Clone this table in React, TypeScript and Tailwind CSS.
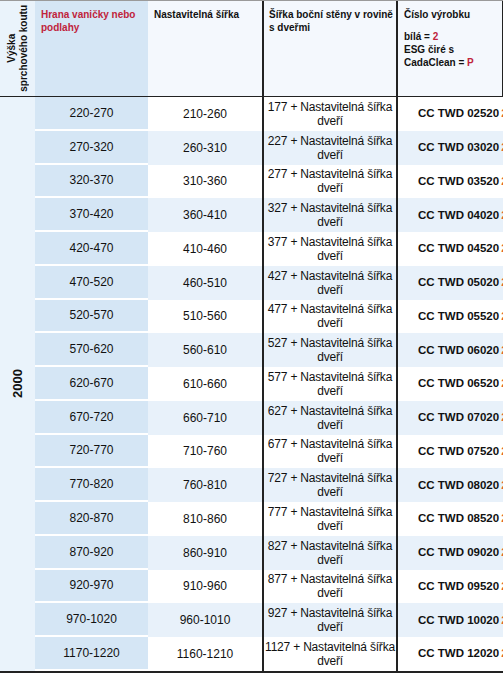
const rows = [
  ["220-270", "210-260", "177", "02520"],
  ["270-320", "260-310", "227", "03020"],
  ["320-370", "310-360", "277", "03520"],
  ["370-420", "360-410", "327", "04020"],
  ["420-470", "410-460", "377", "04520"],
  ["470-520", "460-510", "427", "05020"],
  ["520-570", "510-560", "477", "05520"],
  ["570-620", "560-610", "527", "06020"],
  ["620-670", "610-660", "577", "06520"],
  ["670-720", "660-710", "627", "07020"],
  ["720-770", "710-760", "677", "07520"],
  ["770-820", "760-810", "727", "08020"],
  ["820-870", "810-860", "777", "08520"],
  ["870-920", "860-910", "827", "09020"],
  ["920-970", "910-960", "877", "09520"],
  ["970-1020", "960-1010", "927", "10020"],
  ["1170-1220", "1160-1210", "1127", "12020"],
];

export default function App() {
  return (
    <div className="w-[503px] h-[675px] overflow-hidden bg-white text-[#111] font-['Liberation_Sans',Arial,sans-serif]">
      <div className="w-[640px]">
        {/* header */}
        <div className="flex h-[96px] border-t border-[#9a9a9a] text-[10px] font-bold leading-[13px]">
          <div className="w-[35px] shrink-0 bg-[#eaf3fb] flex items-center justify-center">
            <div className="[writing-mode:vertical-rl] rotate-180 text-center leading-[12px]">
              Výška<br />sprchového koutu
            </div>
          </div>
          <div className="w-[113px] shrink-0 bg-[#d5e6f5] px-[6px] pt-[7px] text-[#c0233b]">
            Hrana vaničky nebo podlahy
          </div>
          <div className="w-[114px] shrink-0 bg-[#f4f8fd] px-[6px] pt-[7px]">Nastavitelná šířka</div>
          <div className="w-[136px] shrink-0 bg-[#f4f8fd] border-x-2 border-[#222] pl-[5px] pr-0 pt-[7px]">
            Šířka boční stěny v rovině s dveřmi
          </div>
          <div className="w-[106px] shrink-0 bg-[#f4f8fd] border-r-2 border-[#222] px-[6px] pt-[7px]">
            <div>Číslo výrobku</div>
            <div className="mt-[9px]">
              bílá = <span className="text-[#c0233b]">2</span>
            </div>
            <div>ESG čiré s</div>
            <div>
              CadaClean = <span className="text-[#c0233b]">P</span>
            </div>
          </div>
        </div>
        <div className="h-[1px] bg-[#222]" />

        {/* body */}
        <div className="flex border-b-2 border-[#222]">
          <div className="w-[35px] shrink-0 bg-[#eaf3fb] flex items-center justify-center">
            <div className="[writing-mode:vertical-rl] rotate-180 text-[13px] font-bold">2000</div>
          </div>
          <div className="flex flex-col">
            {rows.map((r, i) => {
              const stripe = i % 2 === 1 ? "bg-[#e8f1fa]" : "bg-white";
              return (
                <div key={i} className="flex h-[33.75px] text-[12px]">
                  <div className="w-[113px] shrink-0 bg-[#d5e6f5] border-b-2 border-white flex items-center justify-center">
                    {r[0]}
                  </div>
                  <div className={`w-[114px] shrink-0 flex items-center justify-center ${stripe}`}>{r[1]}</div>
                  <div
                    className={`w-[136px] shrink-0 border-x-2 border-[#222] flex items-center justify-center text-center leading-[14px] tracking-[-0.2px] whitespace-nowrap ${stripe}`}
                  >
                    <div>
                      {r[2]} + Nastavitelná šířka
                      <br />
                      dveří
                    </div>
                  </div>
                  <div className={`w-[240px] shrink-0 flex items-center pl-[20px] text-[11.5px] font-bold ${stripe}`}>
                    CC TWD {r[3]}
                    <span className="ml-[2px] text-[#e2632b]">2</span>
                  </div>
                </div>
              );
            })}
          </div>
        </div>
      </div>
    </div>
  );
}
